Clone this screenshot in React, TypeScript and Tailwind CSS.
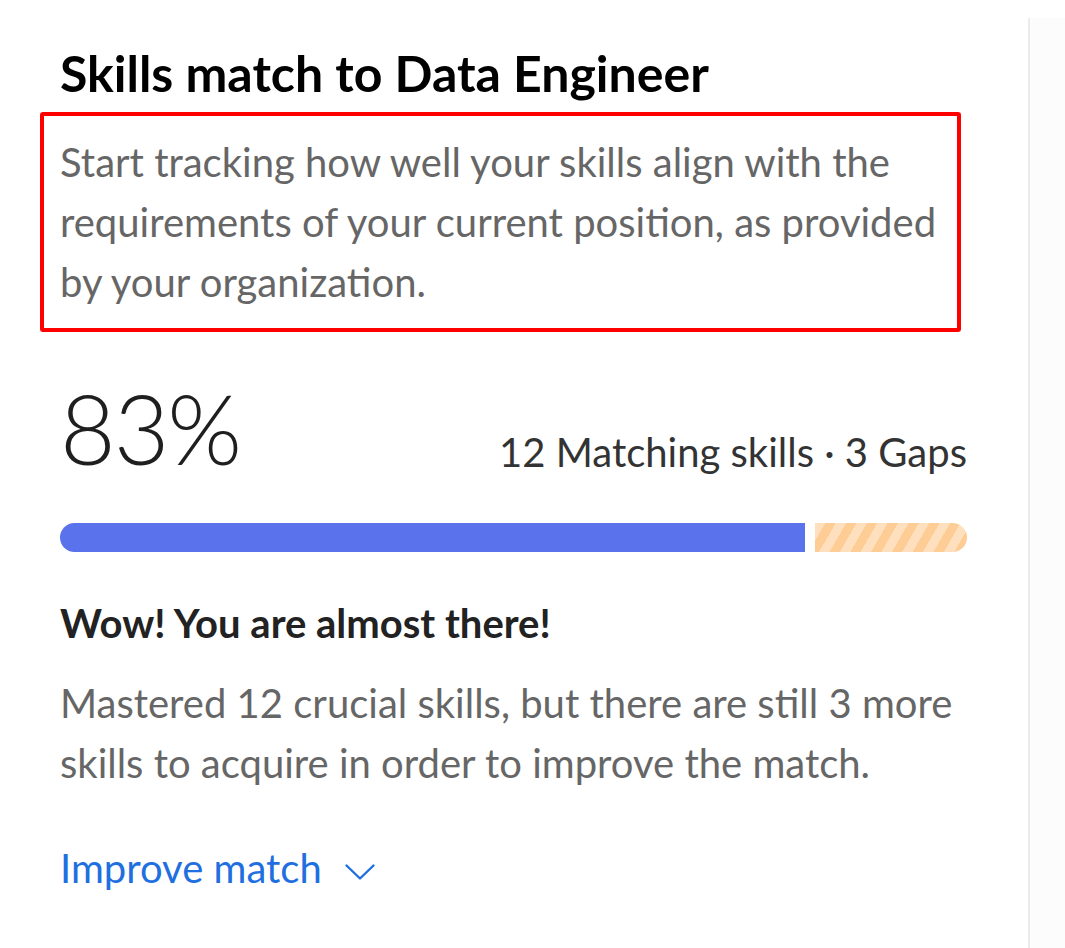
import React from 'react'

function Chevron() {
  return (
    <svg width="30" height="16" viewBox="0 0 30 16" fill="none" className="ml-[23px] mt-[8px]">
      <polyline points="1.5,1.5 15,14.5 28.5,1.5" stroke="#1f6fe0" strokeWidth="2.4" strokeLinecap="round" strokeLinejoin="round" />
    </svg>
  )
}

export default function App() {
  return (
    <div className="flex min-h-screen bg-white font-['Lato',sans-serif]">
      {/* Main card */}
      <div className="w-[1028px] shrink-0 pl-[60px] pr-[61px] pt-[43px]">
        <h2 className="text-[50px] leading-[60px] font-bold text-black">Skills match to Data Engineer</h2>

        <p className="mt-[9px] -ml-[20px] w-[921px] border-4 border-[#ff0000] rounded-[3px] pl-[16px] py-[16px] text-[40px] leading-[60px] text-[#666666]">
          Start tracking how well your skills align with the requirements of your current position, as provided by your organization.
        </p>

        <div className="mt-[48px] flex items-end justify-between">
          <span className="text-[96px] leading-none font-light tracking-[-2px] text-[#1f1f1f]">83%</span>
          <span className="text-[40px] leading-[1.2] text-[#333333]">12 Matching skills · 3 Gaps</span>
        </div>

        {/* Progress bar */}
        <div className="mt-[47px] flex h-[29px] gap-[10px]">
          <div className="flex-[83] rounded-l-full bg-[#5a72ec]" />
          <div className="flex-[17] rounded-r-full bg-[repeating-linear-gradient(120deg,#fee0bf_0px,#fee0bf_9px,#fecd95_9px,#fecd95_18px)]" />
        </div>

        <h3 className="mt-[47px] text-[40px] leading-[1.2] font-bold text-[#222222]">Wow! You are almost there!</h3>
        <p className="mt-[26px] text-[40px] leading-[60px] text-[#666666]">
          Mastered 12 crucial skills, but there are still 3 more skills to acquire in order to improve the match.
        </p>

        <button className="mt-[51px] flex items-center text-[40px] leading-[1.2] text-[#1f6fe0]">
          Improve match
          <Chevron />
        </button>
      </div>

      {/* Side panel */}
      <div className="mt-[18px] flex-1 border-l-2 border-[#ebebeb] bg-[#fcfcfc]" />
    </div>
  )
}
